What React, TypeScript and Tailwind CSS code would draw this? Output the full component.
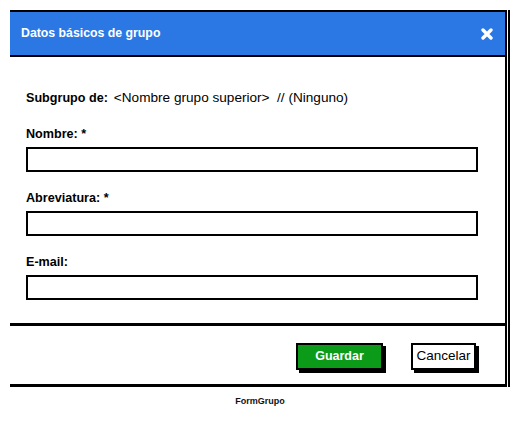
import React from 'react';

const Field: React.FC<{ label: string; top: string }> = ({ label, top }) => (
  <div className={top}>
    <div className="h-4 text-[12.6px] leading-4 font-bold text-black">{label}</div>
    <div className="mt-[5px] w-[452px] h-[25px] border-2 border-black bg-white" />
  </div>
);

const App: React.FC = () => {
  return (
    <div className="w-[522px] h-[443px] bg-white pt-[10px] pl-[10px] font-['Liberation_Sans',sans-serif]">
      <div className="w-[500px] border-r-2 border-black pr-px">
        <div className="flex flex-col border-r-2 border-black">
          {/* header */}
          <div className="h-[47px] border-t-2 border-b-2 border-black bg-[#2b78e4] flex items-center justify-between pl-[11px] pr-[11px]">
            <span className="text-white text-[12.3px] font-bold">Datos básicos de grupo</span>
            <svg width="12" height="12" viewBox="0 0 12 12" className="mr-[1px]">
              <path d="M2 2 L10 10 M10 2 L2 10" stroke="#fff" strokeWidth="3.4" strokeLinecap="round" />
            </svg>
          </div>

          {/* body */}
          <div className="pl-4 pt-[33px] pb-[23px]">
            <div className="h-4 leading-4 text-black flex items-center">
              <span className="font-bold text-[12.6px]">Subgrupo de:</span>
              <span className="ml-[6px] text-[13.6px] whitespace-pre">&lt;Nombre grupo superior&gt;  // (Ninguno)</span>
            </div>
            <Field label="Nombre: *" top="mt-5" />
            <Field label="Abreviatura: *" top="mt-[18px]" />
            <Field label="E-mail:" top="mt-[18px]" />
          </div>

          {/* footer */}
          <div className="h-[64px] border-t-[3px] border-b-[3px] border-black flex items-start justify-end gap-[28px] pt-[17px] pr-[29px]">
            <button className="w-[87px] h-[27px] bg-[#0c9a19] border-2 border-black shadow-[3px_3px_0_#000] text-white text-[12.5px] font-bold">
              Guardar
            </button>
            <button className="w-[65px] h-[27px] bg-white border-2 border-black shadow-[3px_3px_0_#000] text-black text-[13.5px]">
              Cancelar
            </button>
          </div>
        </div>
      </div>
      <div className="w-[500px] text-center mt-[8px] text-[9px] font-bold text-[#111]">
        FormGrupo
      </div>
    </div>
  );
};

export default App;
